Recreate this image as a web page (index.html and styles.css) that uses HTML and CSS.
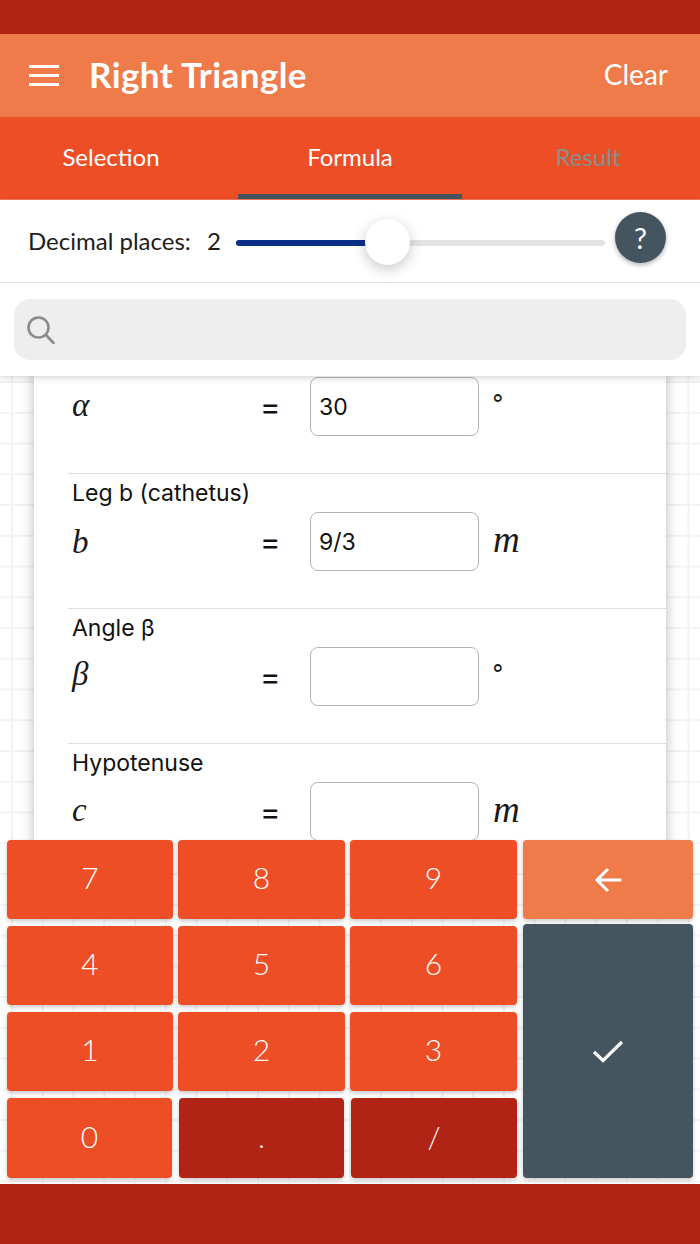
FILE: index.html
```html
<!DOCTYPE html>
<html>

<head>
    <title>Right Triangle</title>
    <link rel="stylesheet" href="styles.css">
</head>

<body>
    <div class="statusBar"></div>

    <div class="header">
        <div class="menu"><span></span><span></span><span></span></div>
        <div class="titulo">Right Triangle</div>
        <div class="clearBtn">Clear</div>
    </div>

    <div class="tabs">
        <div class="tab primera">Selection</div>
        <div class="tab activa">Formula</div>
        <div class="tab apagada">Result</div>
    </div>

    <div class="panel">
        <div class="decimales">
            <span class="decTexto">Decimal places:</span>
            <span class="decValor">2</span>
            <div class="slider">
                <div class="sliderLleno"></div>
                <div class="sliderBola"></div>
            </div>
            <div class="ayuda">?</div>
        </div>
        <div class="buscar">
            <div class="cajaBuscar">
                <svg width="28" height="28" viewBox="0 0 28 28" fill="none" stroke="#8b8b8b" stroke-width="2.6" stroke-linecap="round">
                    <circle cx="11.5" cy="11.5" r="10"/>
                    <path d="M19 19l7.5 8"/>
                </svg>
            </div>
        </div>
    </div>

    <div class="fondo">
        <div class="vista">
            <div class="tarjeta">
                <div class="fila">
                    <div class="etiqueta">&nbsp;</div>
                    <div class="campo">
                        <span class="variable">α</span>
                        <span class="igual">=</span>
                        <input class="entrada" value="30">
                        <span class="unidad grados">∘</span>
                    </div>
                </div>
                <div class="fila">
                    <div class="etiqueta">Leg b (cathetus)</div>
                    <div class="campo">
                        <span class="variable bajar">b</span>
                        <span class="igual">=</span>
                        <input class="entrada" value="9/3">
                        <span class="unidad">m</span>
                    </div>
                </div>
                <div class="fila">
                    <div class="etiqueta">Angle β</div>
                    <div class="campo">
                        <span class="variable subir">β</span>
                        <span class="igual">=</span>
                        <input class="entrada">
                        <span class="unidad grados">∘</span>
                    </div>
                </div>
                <div class="fila">
                    <div class="etiqueta">Hypotenuse</div>
                    <div class="campo">
                        <span class="variable">c</span>
                        <span class="igual">=</span>
                        <input class="entrada">
                        <span class="unidad">m</span>
                    </div>
                </div>
            </div>
        </div>

        <div class="teclado">
            <div class="tecla">7</div>
            <div class="tecla">8</div>
            <div class="tecla">9</div>
            <div class="tecla lateral clara">
                <svg width="28" height="26" viewBox="0 0 28 26" fill="none" stroke="#fff" stroke-width="3">
                    <path d="M27.5 13H3M14 2L3 13l11 11"/>
                </svg>
            </div>
            <div class="tecla">4</div>
            <div class="tecla">5</div>
            <div class="tecla">6</div>
            <div class="tecla lateral pizarra">
                <svg width="30" height="23" viewBox="0 0 30 23" fill="none" stroke="#fff" stroke-width="3.2">
                    <path d="M1 12l9 8.5L29 2"/>
                </svg>
            </div>
            <div class="tecla">1</div>
            <div class="tecla">2</div>
            <div class="tecla">3</div>
            <div class="tecla cero">0</div>
            <div class="tecla oscura punto">.</div>
            <div class="tecla oscura barra">/</div>
        </div>
    </div>

    <div class="pie"></div>
</body>

</html>
```

FILE: styles.css
```css
* {
    box-sizing: border-box;
}

body {
    margin: 0;
    width: 700px;
    height: 1244px;
    overflow: hidden;
    display: flex;
    flex-direction: column;
    font-family: Lato, "Open Sans", sans-serif;
    background-color: white;
}

.statusBar {
    height: 34px;
    background-color: #b02315;
}

.header {
    height: 83px;
    display: flex;
    align-items: center;
    padding: 0 32px 0 29px;
    background-color: #ee7b49;
    color: white;
}

.menu {
    width: 30px;
    display: flex;
    flex-direction: column;
    gap: 6px;
}

.menu span {
    height: 3px;
    background-color: white;
}

.titulo {
    margin-left: 30px;
    margin-top: -4px;
    flex: 1;
    font-size: 35px;
    font-weight: 700;
    letter-spacing: 0.4px;
}

.clearBtn {
    margin-top: -4px;
    font-size: 28px;
}

.tabs {
    height: 83px;
    display: flex;
    background-color: #ed4e26;
    color: white;
    font-size: 24px;
    border-bottom: 1px solid #f47a5a;
}

.tab {
    width: 238px;
    display: flex;
    justify-content: center;
    align-items: center;
    padding-bottom: 4px;
}

.tab.primera {
    padding-right: 16px;
}

.tab.activa {
    width: 224px;
    border-bottom: 5px solid #455560;
    padding-bottom: 0;
    padding-top: 1px;
}

.tab.apagada {
    padding-left: 14px;
    color: #86908f;
}

.panel {
    height: 176px;
    position: relative;
    z-index: 2;
    background-color: white;
    box-shadow: 0 2px 7px rgba(0, 0, 0, 0.16);
}

.decimales {
    height: 83px;
    display: flex;
    align-items: center;
    padding: 0 34px 0 28px;
    font-size: 24px;
    border-bottom: 1px solid #e2e2e2;
    color: #1d1d1d;
}

.decTexto {
    width: 179px;
    margin-top: -2px;
}

.decValor {
    width: 29px;
    margin-top: -2px;
}

.slider {
    width: 369px;
    height: 6px;
    position: relative;
    margin-top: 4px;
    border-radius: 3px;
    background-color: #e3e3e5;
}

.sliderLleno {
    width: 135px;
    height: 6px;
    border-radius: 3px;
    background-color: #0a2f84;
}

.sliderBola {
    position: absolute;
    left: 129px;
    top: -21px;
    width: 45px;
    height: 46px;
    border-radius: 50%;
    background-color: white;
    box-shadow: 0 4px 14px rgba(0, 0, 0, 0.22);
}

.ayuda {
    width: 51px;
    height: 51px;
    margin-left: 10px;
    margin-top: -7px;
    border-radius: 50%;
    display: flex;
    justify-content: center;
    align-items: center;
    background-color: #455560;
    color: white;
    font-size: 29px;
    box-shadow: 0 2px 5px rgba(0, 0, 0, 0.3);
}

.buscar {
    padding: 16px 14px;
}

.cajaBuscar {
    height: 61px;
    display: flex;
    align-items: center;
    padding-left: 13px;
    border-radius: 16px;
    background-color: #eeeeee;
}

.fondo {
    height: 808px;
    background-color: white;
    background-image:
        linear-gradient(#f3f3f3 2px, transparent 2px),
        linear-gradient(90deg, #f3f3f3 2px, transparent 2px);
    background-size: 30.75px 30.75px;
    background-position: 11px 5px;
}

.vista {
    height: 464px;
    overflow: hidden;
    padding: 0 34px 20px;
}

.tarjeta {
    margin-top: -38px;
    padding-left: 34px;
    background-color: white;
    box-shadow: 0 0 12px rgba(0, 0, 0, 0.28);
}

.fila {
    height: 135px;
    padding-top: 5px;
    border-top: 1px solid #dedede;
    font-family: Inter, "Liberation Sans", sans-serif;
}

.etiqueta {
    height: 33px;
    padding-left: 4px;
    font-size: 23px;
    line-height: 28px;
    color: #111;
}

.campo {
    display: flex;
    align-items: center;
}

.variable {
    width: 192px;
    margin-top: -3px;
    padding-left: 4px;
    font-family: "Liberation Serif", serif;
    font-style: italic;
    font-size: 33px;
    color: #1a1a1a;
}

.variable.subir {
    margin-top: -5px;
}

.variable.bajar {
    margin-top: 1px;
}

.igual {
    width: 50px;
    font-size: 31px;
    color: #111;
}

.entrada {
    width: 169px;
    height: 59px;
    padding: 0 8px;
    border: 1px solid #b4b4b4;
    border-radius: 8px;
    font-family: Inter, "Liberation Sans", sans-serif;
    font-size: 23px;
    color: #111;
    background-color: white;
}

.unidad {
    margin-left: 14px;
    margin-top: -4px;
    font-family: "Liberation Serif", serif;
    font-style: italic;
    font-size: 37px;
    color: #1a1a1a;
}

.unidad.grados {
    margin-left: 11px;
    margin-top: -20px;
    font-style: normal;
    font-size: 25px;
}

.teclado {
    height: 344px;
    padding-left: 7px;
    display: grid;
    grid-template-columns: 166px 167px 167px 171px;
    grid-auto-rows: 79px;
    column-gap: 5px;
    row-gap: 7px;
}

.tecla {
    padding-bottom: 5px;
    display: flex;
    justify-content: center;
    align-items: center;
    border-radius: 4px;
    background-color: #ed4e26;
    color: white;
    font-size: 30px;
    font-weight: 300;
    box-shadow: 0 2px 4px rgba(0, 0, 0, 0.22);
}

.oscura {
    background-color: #b02315;
}

.clara {
    padding-bottom: 0;
    background-color: #ee7b49;
}

.lateral {
    margin-left: 1px;
}

.pizarra {
    grid-row: 2 / 5;
    grid-column: 4;
    margin-top: -2px;
    margin-bottom: -1px;
    padding-bottom: 0;
    background-color: #455560;
}

.cero {
    margin-right: 1px;
    margin-bottom: -1px;
}

.punto {
    margin: 0 1px -1px;
}

.barra {
    margin-left: 1px;
    margin-bottom: -1px;
}

.pie {
    flex: 1;
    background-color: #b02315;
}
```
